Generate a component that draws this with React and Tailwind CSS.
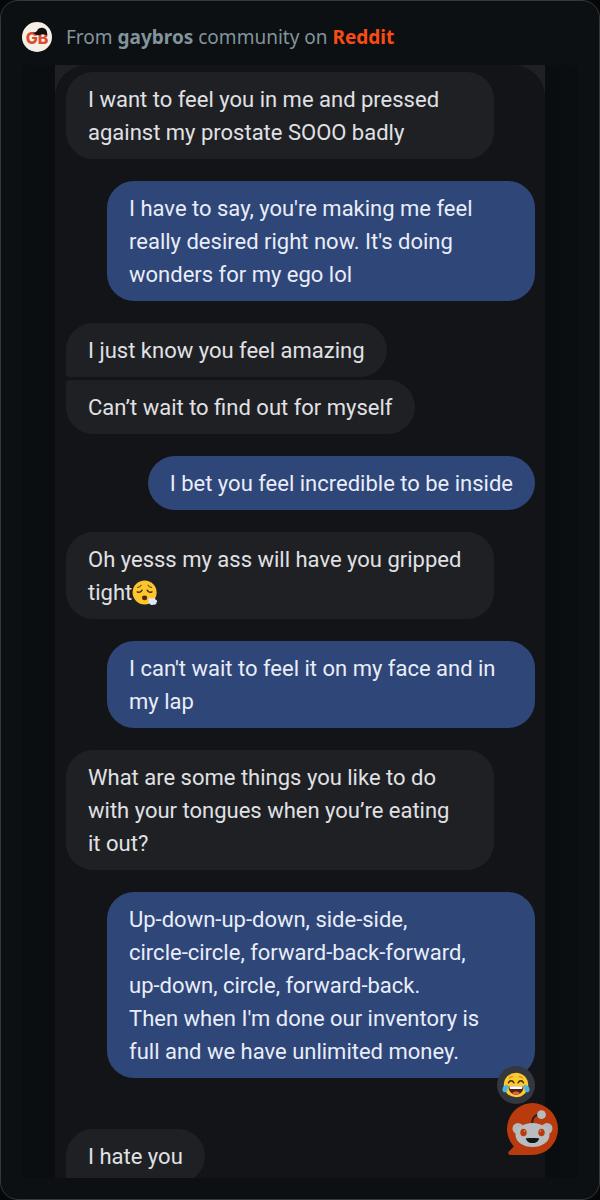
import React from "react";
import clsx from "clsx";

const messages = [
  { from: "them", text: "I want to feel you in me and pressed against my prostate SOOO badly" },
  { from: "me", text: "I have to say, you're making me feel really desired right now. It's doing wonders for my ego lol" },
  { from: "them", text: "I just know you feel amazing", group: "first" },
  { from: "them", text: "Can’t wait to find out for myself", group: "last" },
  { from: "me", text: "I bet you feel incredible to be inside" },
  { from: "them", text: "Oh yesss my ass will have you gripped tight", emoji: true },
  { from: "me", text: "I can't wait to feel it on my face and in my lap" },
  {
    from: "them",
    text: "What are some things you like to do with your tongues when you’re eating\nit out?",
    wide: true,
  },
  {
    from: "me",
    text: "Up-down-up-down, side-side,\ncircle-circle, forward-back-forward,\nup-down, circle, forward-back.\nThen when I'm done our inventory is full and we have unlimited money.",
    wide: true,
    reaction: true,
  },
  { from: "them", text: "I hate you", group: "cut" },
];

function ExhaleEmoji() {
  return (
    <svg viewBox="0 0 32 32" className="inline-block size-[26px] align-[-6px]" role="img" aria-label="Face exhaling">
      <circle cx="15.5" cy="15.5" r="14.8" fill="#fcc62c" />
      <path d="M7 9.200c1.800-.2 3.200-1.200 4.200-2.800M24 9.200c-1.800-.2-3.200-1.200-4.200-2.800" fill="none" stroke="#6d4a16" strokeWidth="1.500" strokeLinecap="round" />
      <path d="M6.500 14.500c2 1.200 4.500.5 5.800-2M24.500 14.500c-2 1.200-4.500.5-5.800-2" fill="none" stroke="#4b3210" strokeWidth="1.800" strokeLinecap="round" />
      <ellipse cx="15.500" cy="22" rx="3.200" ry="2.800" fill="#4b2a10" />
      <path d="M21 22.500c1.500-.8 3 0 3.500.8 1-1.800 4-1.500 4.300.7 2.200.2 2.700 2.500 1.400 3.700.2 2-2 3.300-3.700 2.300-1.500 1.500-4.200.9-4.500-1-2-.2-2.700-2.400-1.300-3.600-1-.8-.9-2.300.3-2.900z" fill="#dfe8f2" />
    </svg>
  );
}

function JoyEmoji() {
  return (
    <svg viewBox="0 0 32 32" className="size-7" role="img" aria-label="Face with tears of joy">
      <circle cx="16" cy="16" r="14" fill="#fcc92f" />
      <path d="M8.500 8c1-1.300 2.500-1.800 4-1.500M23.500 8c-1-1.300-2.500-1.800-4-1.500" fill="none" stroke="#c48a24" strokeWidth="1.200" strokeLinecap="round" />
      <path d="M7.500 13.500c1.300-3 4.700-3 6 0M18.500 13.500c1.300-3 4.700-3 6 0" fill="none" stroke="#422b0d" strokeWidth="1.700" strokeLinecap="round" />
      <path d="M7.500 17.500h17c.3 5.500-3.500 9.500-8.500 9.500s-8.800-4-8.500-9.500z" fill="#4a2313" />
      <path d="M8.500 17.500h15c.2 1.600-.3 3-1.200 3H9.700c-.9 0-1.400-1.400-1.200-3z" fill="#fff" />
      <path d="M11.500 25.200c2-2.400 7-2.400 9 0-2.600 2.300-6.400 2.300-9 0z" fill="#ec5a4d" />
      <path d="M6.500 15.500C2.500 16 .5 18.500.5 21c0 2.300 1.500 3.600 3.200 3.400C6.500 24 7 20 6.500 15.500zM25.500 15.500c4 .5 6 3 6 5.500 0 2.300-1.500 3.600-3.200 3.400-2.800-.4-3.300-4.400-2.800-8.900z" fill="#4cb4e4" />
    </svg>
  );
}

function RedditBadge() {
  return (
    <svg viewBox="0 0 52 52" className="absolute right-[41px] bottom-11 size-[52px]" role="img" aria-label="Reddit">
      <path d="M26 0a26 26 0 0 1 0 52H4.200c-1.900 0-2.700-2.200-1.400-3.500l5-5A26 26 0 0 1 26 0z" fill="#b93a0d" />
      <path d="M26 20.500c0-5 2.500-8.500 7.500-9" fill="none" stroke="#1c2022" strokeWidth="1.800" />
      <circle cx="35.500" cy="11.700" r="4.400" fill="#b9bcbe" />
      <circle cx="12" cy="25.500" r="5.500" fill="#b4b8ba" />
      <circle cx="41" cy="25.500" r="5.500" fill="#b4b8ba" />
      <ellipse cx="26.500" cy="32" rx="17" ry="12" fill="#b9bdbf" />
      <ellipse cx="17.500" cy="29.500" rx="3.200" ry="3.800" fill="#b93a0d" />
      <ellipse cx="35.500" cy="29.500" rx="3.200" ry="3.800" fill="#b93a0d" />
      <circle cx="18.500" cy="28" r="0.800" fill="#df9a7c" />
      <circle cx="34.500" cy="28" r="0.800" fill="#df9a7c" />
      <path d="M20.500 35.300c4-.5 8-.5 12 0 .5 0 .7.400.5.900-1.100 2.500-3.600 3.900-6.500 3.900s-5.400-1.400-6.500-3.900c-.2-.5 0-.9.500-.9z" fill="#101517" />
    </svg>
  );
}

function Avatar() {
  return (
    <div className="relative flex size-[30px] items-center justify-center rounded-full bg-[#f6efe6]">
      <span className="pt-0.5 font-['Inter',sans-serif] text-base leading-none font-extrabold text-[#dc4a32]">GB</span>
      <svg viewBox="0 0 30 30" className="absolute inset-0" aria-hidden="true">
        <path d="M11 10.500c2 .2 3-.5 4-1.500 1-3 4-3.800 6.500-3 3 .8 4.200 3.800 3.500 7.500-2-1.300-5-1.600-7.500-.5-2.500.5-5-.5-6.500-2.500z" fill="#101010" />
      </svg>
    </div>
  );
}

function Bubble({ message }) {
  const { from, text, group, emoji, reaction, wide } = message;
  const mine = from === "me";
  return (
    <li
      className={clsx(
        "relative max-w-[428px] px-[22px] pt-[11px] pb-2.5 whitespace-pre-line",
        mine ? "self-end bg-[#2f4679] text-[#e9edf8]" : "self-start bg-[#1f2024] text-[#e0e1e4]",
        wide && "w-full",
        group === "first" && "mt-[22px] rounded-[27px] rounded-bl-sm",
        group === "last" && "mt-[3px] rounded-[27px] rounded-tl-sm",
        group === "cut" && "mt-[51px] -mb-[5px] rounded-[27px] rounded-bl-sm",
        !group && "mt-[22px] rounded-[27px] first:mt-0"
      )}
    >
      {text}
      {emoji && <ExhaleEmoji />}
      {reaction && (
        <span className="absolute right-0 -bottom-[26px] flex size-[38px] items-center justify-center rounded-full bg-[#34373d]">
          <JoyEmoji />
        </span>
      )}
    </li>
  );
}

export default function App() {
  return (
    <div className="min-h-screen bg-[#050709]">
      <article className="relative flex min-h-screen flex-col rounded-[18px] border border-[#33393c] bg-[#0c1013] px-[21px] pb-[21px]">
        <header className="flex h-16 items-center gap-3.5 pt-2">
          <Avatar />
          <p className="font-['Noto_Sans',sans-serif] text-[19px] text-[#82949b]">
            From <b className="font-bold">gaybros</b> community on{" "}
            <a href="#reddit" className="font-bold text-[#fb4b14]">Reddit</a>
          </p>
        </header>
        <main className="flex-1 bg-linear-to-r from-[#0a0e10] via-[#060809] to-[#0a0e10] px-[33px]">
          <div className="bg-[#1f2023]">
            <ul className="flex flex-col overflow-hidden rounded-t-[32px] bg-[#131418] pt-[7px] pr-2.5 pl-[11px] font-['Roboto',sans-serif] text-[22px] leading-[33px]">
              {messages.map((message) => (
                <Bubble key={message.text} message={message} />
              ))}
            </ul>
          </div>
        </main>
        <RedditBadge />
      </article>
    </div>
  );
}
